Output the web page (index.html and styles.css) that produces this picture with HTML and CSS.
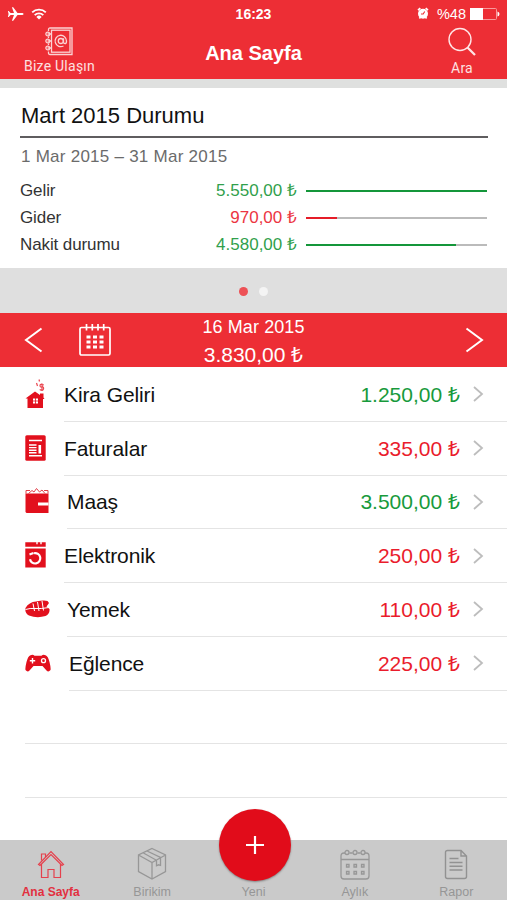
FILE: index.html
```html
<!DOCTYPE html>
<html lang="tr">
  <head>
    <meta charset="UTF-8" />
    <meta name="viewport" content="width=device-width, initial-scale=1.0" />
    <title>Ana Sayfa</title>
    <link rel="stylesheet" href="styles.css">
  </head>
  <body>
    <header class="header">
      <div class="status">
        <div class="status-left">
          <svg width="17" height="16" viewBox="0 0 17 16"><path d="M16.500 8c0-.8-.7-1.100-1.700-1.100H10.500L6.200 1.200H4.900L7 6.900H3.600L1.700 4.900H.9L1.600 8 .9 11.100h.8l1.900-2H7L4.900 14.800h1.300l4.300-5.700h4.300c1 0 1.700-.3 1.700-1.100z" fill="#fff"/></svg>
          <svg width="16" height="12" viewBox="0 0 16 12"><g fill="none" stroke="#fff" stroke-width="1.900"><path d="M1.200 4.400a9.800 9.800 0 0 1 13.600 0"/><path d="M3.700 7.100a6.200 6.200 0 0 1 8.600 0"/></g><path d="M8 11.500L5.400 8.900a3.700 3.700 0 0 1 5.200 0z" fill="#fff"/></svg>
        </div>
        <b class="clock">16:23</b>
        <div class="status-right">
          <svg width="12" height="13" viewBox="0 0 12 13"><circle cx="6" cy="6.800" r="5" fill="#fff"/><path d="M1 3.200L3.300 1.200M11 3.200L8.700 1.200M2.400 11.600l1-1.300M9.600 11.600l-1-1.300" stroke="#fff" stroke-width="1.700"/><path d="M7.700 4.500L6.200 7H4" fill="none" stroke="#ed2e35" stroke-width="1.100"/></svg>
          <span class="percent">%48</span>
          <svg width="30" height="12" viewBox="0 0 30 12"><rect x=".5" y=".5" width="26" height="11" rx="1" fill="none" stroke="#f89a9c"/><path d="M0 0h13v12H0z" fill="#fff"/><path d="M27.500 3.500q2 .5 2 2.500t-2 2.500z" fill="#fff"/></svg>
        </div>
      </div>
      <div class="nav">
        <div class="contact">
          <svg width="30" height="29" viewBox="0 0 30 29"><g fill="none" stroke="#fbd3d4" stroke-width="1.300"><path d="M4.500 4V2.500q0-1.500 1.500-1.500h22v26.500H6q-1.500 0-1.500-1.500v-1.500M4.500 9.500v1.500M4.500 16.500V18"/><rect x="7.500" y="3.200" width="18.500" height="22"/><circle cx="3.800" cy="7" r="1.900"/><circle cx="3.800" cy="14" r="1.900"/><circle cx="3.800" cy="21" r="1.900"/><path d="M3.500 7h4M3.500 14h4M3.500 21h4"/><circle cx="16.800" cy="14" r="2.500"/><path d="M19.500 11.200v3.500q0 2 1.500 2t1.500-2.700a5.700 5.700 0 1 0-3 5"/></g></svg>
          <span>Bize Ulaşın</span>
        </div>
        <h1>Ana Sayfa</h1>
        <div class="search">
          <svg width="30" height="30" viewBox="0 0 30 30" fill="none" stroke="#ffe4e5"><circle cx="13" cy="12.500" r="11" stroke-width="1.400"/><path d="M20.500 20.500l7.500 7.500" stroke-width="2.300"/></svg>
          <span>Ara</span>
        </div>
      </div>
    </header>

    <section class="summary">
      <h2>Mart 2015 Durumu</h2>
      <p class="period">1 Mar 2015 – 31 Mar 2015</p>
      <div class="stat">
        <span>Gelir</span>
        <span class="sum green">5.550,00 ₺</span>
        <div class="bar"><div class="fill fill-green" style="width: 100%"></div></div>
      </div>
      <div class="stat">
        <span>Gider</span>
        <span class="sum red">970,00 ₺</span>
        <div class="bar"><div class="fill fill-red" style="width: 17%"></div></div>
      </div>
      <div class="stat">
        <span>Nakit durumu</span>
        <span class="sum green">4.580,00 ₺</span>
        <div class="bar"><div class="fill fill-green" style="width: 83%"></div></div>
      </div>
    </section>

    <div class="dots">
      <span class="dot active"></span>
      <span class="dot"></span>
    </div>

    <div class="day">
      <svg width="20" height="28" viewBox="0 0 20 28"><path d="M17.500 2.500L2 14l15.500 11.500" fill="none" stroke="#fff" stroke-width="2"/></svg>
      <svg class="day-icon" width="34" height="34" viewBox="0 0 34 34"><g fill="none" stroke="#fff" stroke-width="1.700"><rect x="2" y="4.500" width="30" height="27.500" rx="1.500"/><path d="M8.500 1v6.500M14.300 1v6.500M20 1v6.500M25.700 1v6.500"/></g><path d="M8.500 12.500h4v3h-4zM15 12.500h4v3h-4zM21.500 12.500h4v3h-4zM8.500 17.500h4v3h-4zM15 17.500h4v3h-4zM21.500 17.500h4v3h-4zM8.500 22.500h4v3h-4zM15 22.500h4v3h-4zM21.500 22.500h4v3h-4z" fill="#fff"/></svg>
      <div class="day-text">
        <span class="date">16 Mar 2015</span>
        <span class="total">3.830,00 ₺</span>
      </div>
      <svg width="20" height="28" viewBox="0 0 20 28"><path d="M2.500 2.500L18 14 2.500 25.500" fill="none" stroke="#fff" stroke-width="2"/></svg>
    </div>

    <main class="list">
      <div class="row">
        <div class="icon">
          <svg width="21" height="30" viewBox="0 0 21 30"><path d="M.5 19.500L10 12.500l5 3.500v-1.500h3.500v4l1 1.500H18v9H2.500v-9.500z" fill="#e2101d"/><path d="M8 19.500h5v5H8z" fill="#fff"/><path d="M10.500 19v6M7.500 22h6" stroke="#e2101d" stroke-width=".8"/><path d="M18.800 6q-3.800-1.500-3.800.5t2 1.500 1.500 2-3.800.5M17 4.500V12M11.500 4l1 3M14 .5l.5 2" fill="none" stroke="#ea4650" stroke-width="1.200"/></svg>
        </div>
        <div class="entry">
          <span class="name">Kira Geliri</span>
          <span class="amount green">1.250,00 ₺</span>
          <svg class="arrow" width="12" height="18" viewBox="0 0 12 18"><path d="M2 2l8 7-8 7"/></svg>
        </div>
      </div>
      <div class="row">
        <div class="icon">
          <svg width="21" height="26" viewBox="0 0 21 26"><rect x=".3" y=".3" width="20.400" height="25.400" rx="1.500" fill="#e2101d"/><path d="M4 5.500h13M4 10h7.500M4 12.600h7.500M4 15.200h7.500M4 17.800h7.500M4 20.800h13" stroke="#fff" stroke-width="1.400"/><path d="M14.800 10v8.500" stroke="#fff" stroke-width="2.600"/></svg>
        </div>
        <div class="entry">
          <span class="name">Faturalar</span>
          <span class="amount red">335,00 ₺</span>
          <svg class="arrow" width="12" height="18" viewBox="0 0 12 18"><path d="M2 2l8 7-8 7"/></svg>
        </div>
      </div>
      <div class="row">
        <div class="icon">
          <svg width="24" height="26" viewBox="0 0 24 26"><path d="M.5 5.500h23V25h-22l-1-1z" fill="#e2101d"/><path d="M1 5.500V2.500h4M19 2.500h4v3M3.500 5.500L7 2.500 9 4l2.500-3.500L14.500 4l2.500-2 3 3.500" fill="none" stroke="#e2404a" stroke-width="1"/><path d="M13 14.500h10.500v3H13z" fill="#fff"/></svg>
        </div>
        <div class="entry wide">
          <span class="name">Maaş</span>
          <span class="amount green">3.500,00 ₺</span>
          <svg class="arrow" width="12" height="18" viewBox="0 0 12 18"><path d="M2 2l8 7-8 7"/></svg>
        </div>
      </div>
      <div class="row">
        <div class="icon">
          <svg width="21" height="26" viewBox="0 0 21 26"><path d="M.3.300h11v2h1.400v-2h2.600v2h1.400v-2h4v4.500H.3zM.3 6.500h20.400v19H.3z" fill="#e2101d"/><path d="M9 11.200a5.200 5.200 0 1 1-4 6M4.500 12.500l4-1.500" fill="none" stroke="#fff" stroke-width="2.200"/></svg>
        </div>
        <div class="entry">
          <span class="name">Elektronik</span>
          <span class="amount red">250,00 ₺</span>
          <svg class="arrow" width="12" height="18" viewBox="0 0 12 18"><path d="M2 2l8 7-8 7"/></svg>
        </div>
      </div>
      <div class="row">
        <div class="icon">
          <svg width="25" height="18" viewBox="0 0 25 18"><path d="M.5 8Q4 2 11 1.500 19-.2 22.500 1l1.500 2-2.500 3.500L24.500 9q.5 5-4 7Q12 18.500 4 15.500-.5 13 .5 8z" fill="#e2101d"/><path d="M.5 9.500Q5 8 10 8.500 16 9 24 7.500M8 3.500L9.500 11M12.500 2L14 11M17 1l1.500 9.500" fill="none" stroke="#fff" stroke-width="1"/></svg>
        </div>
        <div class="entry wide">
          <span class="name">Yemek</span>
          <span class="amount red">110,00 ₺</span>
          <svg class="arrow" width="12" height="18" viewBox="0 0 12 18"><path d="M2 2l8 7-8 7"/></svg>
        </div>
      </div>
      <div class="row">
        <div class="icon">
          <svg width="26" height="18" viewBox="0 0 26 18"><path d="M5.500 1.200Q8 0 9.500 1.800h7Q18 0 20.500 1.200 23 2 24.500 8t1 8q-2 2.500-4 .5L17.500 12h-9l-4 4.500q-2 2-4-.5-.5-2 1-8t4-6.800z" fill="#e2101d"/><path d="M7.500 4v5.500M4.800 6.700h5.400" stroke="#fff" stroke-width="1.400"/><circle cx="18.500" cy="6.700" r="2" fill="none" stroke="#fff" stroke-width="1.300"/></svg>
        </div>
        <div class="entry wider">
          <span class="name">Eğlence</span>
          <span class="amount red">225,00 ₺</span>
          <svg class="arrow" width="12" height="18" viewBox="0 0 12 18"><path d="M2 2l8 7-8 7"/></svg>
        </div>
      </div>
      <div class="row"><div class="entry"></div></div>
      <div class="row"><div class="entry"></div></div>
    </main>

    <footer class="tabs">
      <div class="tab current">
        <svg width="28" height="30" viewBox="0 0 28 30"><g fill="none" stroke="#e5414d" stroke-width="1.200"><path d="M1.500 15.500L14 2.500l12.500 13-1.500 1L14 5.500 3 16.500z"/><path d="M4.500 15v13.500H11V20.500h6v8h6.500V15M4.500 11.500V5h4v3"/></g></svg>
        <span>Ana Sayfa</span>
      </div>
      <div class="tab">
        <svg width="30" height="34" viewBox="0 0 30 34"><path d="M15 1.500L28.500 8v16.500L15 32 1.500 24.500V8zM1.500 8L15 15.500 28.500 8M15 15.500V32M6 5.800l13.500 7.500v5.500l2-1 2 .5v-8L10 4" fill="none" stroke="#979797" stroke-width="1.300"/></svg>
        <span>Birikim</span>
      </div>
      <div class="tab">
        <span>Yeni</span>
      </div>
      <div class="tab">
        <svg width="30" height="32" viewBox="0 0 30 32"><g fill="none" stroke="#979797" stroke-width="1.300"><path d="M5 4H4Q1 4 1 7v20q0 3 3 3h22q3 0 3-3V7q0-3-3-3h-1M9.500 4h3M17.500 4h3M1 10.500h28"/><circle cx="7" cy="3.500" r="2"/><circle cx="15" cy="3.500" r="2"/><circle cx="23" cy="3.500" r="2"/><path d="M6.500 15.500h2.500v2.500H6.500zM14 15.500h2.500v2.500H14zM21.500 15.500H24v2.500h-2.500zM6.500 22.500h2.500V25H6.500zM14 22.500h2.500V25H14zM21.500 22.500H24V25h-2.500z"/></g></svg>
        <span>Aylık</span>
      </div>
      <div class="tab">
        <svg width="24" height="32" viewBox="0 0 24 32"><path d="M17 1.500H3.500Q1.500 1.500 1.500 3.500v24q0 2 2 2h17q2 0 2-2V7zV7h5.500M5.500 9.500h9M5.500 13.500h13M5.500 17.300h13M5.500 21h13" fill="none" stroke="#929292" stroke-width="1.400"/></svg>
        <span>Rapor</span>
      </div>
      <button class="add" aria-label="Yeni">
        <svg width="20" height="20" viewBox="0 0 20 20"><path d="M10 1v18M1 10h18" stroke="#fff" stroke-width="2.200"/></svg>
      </button>
    </footer>
  </body>
</html>
```
FILE: styles.css
```css
* {
  box-sizing: border-box;
}
body {
  margin: 0;
  height: 900px;
  display: flex;
  flex-direction: column;
  overflow: hidden;
  background-color: #fff;
  color: #111;
  font-family: "Liberation Sans", Arial, sans-serif;
}
svg {
  display: block;
  flex: none;
}
h1, h2, p {
  margin: 0;
}
.green {
  color: #189a3c;
}
.red {
  color: #ea1c2c;
}

/* header */
.header {
  flex: none;
  height: 79px;
  background-color: #ed2e35;
  color: #fff;
}
.status {
  display: grid;
  grid-template-columns: 1fr auto 1fr;
  align-items: center;
  height: 27px;
  padding: 0 7px;
}
.status-left, .status-right {
  display: flex;
  align-items: center;
}
.status-left {
  gap: 7px;
}
.status-right {
  justify-content: flex-end;
}
.clock {
  font-size: 14px;
}
.percent {
  font-size: 14.5px;
  margin: 0 4px 0 8px;
}
.nav {
  display: grid;
  grid-template-columns: 90px 1fr 90px;
}
.nav h1 {
  padding-top: 14px;
  text-align: center;
  font-size: 20px;
  line-height: 24px;
}
.contact, .search {
  display: flex;
  flex-direction: column;
  align-items: center;
  font-family: Roboto, sans-serif;
  font-size: 14px;
  line-height: 16px;
  letter-spacing: 0.25px;
  color: #fde0e1;
}
.contact {
  width: 119px;
}
.contact svg {
  margin-right: 2px;
}
.contact span {
  margin-top: 2px;
}
.search span {
  margin-top: 3px;
}

/* month summary */
.summary {
  flex: none;
  height: 189px;
  padding: 14px 19px 0 20px;
  border-top: 9px solid #dfe0df;
}
.summary h2 {
  height: 36px;
  padding-left: 1px;
  border-bottom: 2px solid #5f5d5f;
  font-size: 22px;
  font-weight: normal;
  line-height: 27px;
}
.period {
  margin: 9px 0 10px;
  padding-left: 1px;
  font-size: 17px;
  line-height: 20px;
  letter-spacing: 0.25px;
  color: #6b6b6b;
}
.stat {
  display: grid;
  grid-template-columns: 115px 161px 181px;
  column-gap: 5px;
  align-items: center;
  height: 27px;
  font-size: 17px;
  line-height: 20px;
  letter-spacing: -0.1px;
  color: #333;
}
.sum {
  padding-right: 4px;
  text-align: right;
  letter-spacing: 0;
}
.stat .green {
  color: #319f4c;
}
.stat .red {
  color: #ec3542;
}
.bar {
  height: 2px;
  background-color: #bbb;
}
.fill {
  height: 100%;
}
.fill-green {
  background-color: #14963a;
}
.fill-red {
  background-color: #e51c28;
}

.dots {
  flex: none;
  display: flex;
  justify-content: center;
  align-items: center;
  gap: 11px;
  height: 45px;
  padding-top: 1px;
  background-color: #dfdfdf;
}
.dot {
  width: 9px;
  height: 9px;
  border-radius: 50%;
  background-color: #f4f4f4;
}
.dot.active {
  background-color: #ed5156;
}

/* selected day */
.day {
  flex: none;
  display: flex;
  align-items: center;
  height: 54px;
  padding: 0 23px 1px 24px;
  background-color: #ed2e35;
  color: #fff;
}
.day-icon {
  margin-left: 34px;
}
.day-text {
  flex: 1;
  display: flex;
  flex-direction: column;
  align-items: center;
  padding: 2px 69px 0 0;
  line-height: 27px;
}
.date {
  font-size: 18px;
  letter-spacing: 0.1px;
}
.total {
  font-size: 21px;
}

/* entries */
.list {
  flex: 1;
  padding-top: 1px;
}
.row {
  display: flex;
  align-items: center;
  height: 53.75px;
  padding-left: 25px;
}
.icon {
  width: 39px;
  padding-bottom: 2px;
}
.entry {
  flex: 1;
  display: flex;
  align-items: center;
  height: 100%;
  padding-right: 23px;
  border-bottom: 1px solid #e4e4e4;
  font-size: 21px;
  line-height: 26px;
}
.row > .entry:first-child {
  margin-left: 0;
}
.wide {
  margin-left: 3px;
}
.wider {
  margin-left: 5px;
}
.name {
  flex: 1;
  padding-top: 1px;
  letter-spacing: -0.1px;
}
.amount {
  padding-top: 1px;
}
.arrow {
  margin-left: 12px;
  fill: none;
  stroke: #bdbdbd;
  stroke-width: 1.8;
}

/* bottom tabs */
.tabs {
  position: relative;
  flex: none;
  display: flex;
  height: 60px;
  background-color: #cacaca;
}
.tab {
  flex: 1;
  display: flex;
  flex-direction: column;
  align-items: center;
  justify-content: flex-end;
  font-size: 12.5px;
  line-height: 15px;
  color: #969696;
}
.tab svg {
  margin-bottom: 4px;
}
.current {
  font-size: 12px;
  font-weight: bold;
  color: #e2303f;
}
.current svg {
  margin-bottom: 6px;
}
.add {
  position: absolute;
  left: 219px;
  top: -31px;
  display: flex;
  align-items: center;
  justify-content: center;
  width: 72px;
  height: 72px;
  border: none;
  border-radius: 50%;
  background-color: #e10c1a;
  box-shadow: 0 1px 2px rgba(0, 0, 0, 0.35);
}
```
